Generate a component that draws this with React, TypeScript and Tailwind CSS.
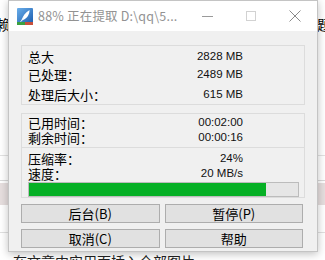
import React from "react";

const cjk = "font-['Noto_Sans_CJK_SC','Noto_Sans',sans-serif]";
const num = "font-['Liberation_Sans','Noto_Sans_CJK_SC',sans-serif]";

function Row({ label, value, h }: { label: string; value: string; h: string }) {
  return (
    <div className={`flex items-center justify-between ${h}`}>
      <span className={`${cjk} text-[13px] leading-[15px] text-black`}>{label}</span>
      <span className={`${num} text-[11.5px] leading-[15px] text-[#111]`}>{value}</span>
    </div>
  );
}

function AppIcon() {
  return (
    <svg width="16" height="17" viewBox="0 0 16 17">
      <defs>
        <linearGradient id="ig" x1="0" y1="0" x2="1" y2="1">
          <stop offset="0" stopColor="#6aaeea" />
          <stop offset="1" stopColor="#1d5fb0" />
        </linearGradient>
      </defs>
      <rect x="0" y="0" width="16" height="15" rx="1" fill="url(#ig)" />
      <path d="M4.5 13 C5.5 8.5 8 4.5 12.5 2 C12.5 6.5 10.5 10 6 12 Z" fill="#fff" />
      <path d="M3.5 14 L6.5 9.5" stroke="#e4eef9" strokeWidth="0.9" />
      <rect x="0" y="14" width="8" height="3" fill="#3aa040" />
      <rect x="8" y="14" width="8" height="3" fill="#c8503c" />
    </svg>
  );
}

function Btn({ children }: { children: React.ReactNode }) {
  return (
    <div
      className={`flex-1 h-[19px] flex items-center justify-center bg-[#e1e1e1] border border-[#adadad] ${cjk} text-[13px] leading-none text-black`}
    >
      {children}
    </div>
  );
}

export default function App() {
  return (
    <div className="relative w-[325px] h-[260px] overflow-hidden bg-white">
      {/* page behind the dialog */}
      <div className="w-full">
        <div className={`flex justify-between items-center h-[40px] pt-[8px] ${cjk} text-[14px] text-black`}>
          <span className="-ml-[4px]">赖</span>
          <span className="-mr-[6px]">题</span>
        </div>
        <div className="h-[115px]" />
        <div className="h-px bg-[#e2e2e2]" />
        <div className="h-[24px]" />
        <div className="h-px bg-[#d8d8d8]" />
        <div className="h-[2px]" />
        <div className="h-[22px] bg-[#e6dede]" />
        <div className="h-[27px]" />
        <div className="h-px bg-[#e0e0e0]" />
        <div className={`pl-[13px] pt-[21px] ${cjk} text-[14px] text-[#222] leading-none whitespace-nowrap`}>
          在文章中实用面插入全部图片
        </div>
      </div>

      {/* dialog window */}
      <div className="absolute left-[8px] top-0 w-[310px] h-[252px] flex flex-col bg-[#f0f0f0] border border-[#c4c4c4] shadow-[0_2px_8px_rgba(0,0,0,0.25)]">
        <div className="h-[30px] flex items-center bg-white shrink-0">
          <div className="ml-[8px] mr-[5px] flex items-center">
            <AppIcon />
          </div>
          <span className={`${cjk} text-[12.5px] text-[#929292] tracking-[0.2px]`}>
            88% 正在提取 D:\qq\5...
          </span>
          <div className="ml-auto flex items-center">
            <div className="w-[44px] flex justify-center">
              <div className="w-[11px] h-px bg-[#9a9a9a]" />
            </div>
            <div className="w-[44px] flex justify-center">
              <div className="w-[10px] h-[10px] border border-[#d2d2d2]" />
            </div>
            <div className="w-[44px] flex justify-center">
              <svg width="12" height="12" viewBox="0 0 12 12">
                <path d="M0.5 0.5 L11.5 11.5 M11.5 0.5 L0.5 11.5" stroke="#8a8a8a" strokeWidth="1" />
              </svg>
            </div>
          </div>
        </div>

        <div className="flex flex-col px-[12px] pt-[14px]">
          <div className="h-[60px] border border-[#dcdcdc] pl-[6px] pr-[61px] pt-[1px] flex flex-col">
            <Row label="总大" value="2828 MB" h="h-[18px]" />
            <Row label="已处理：" value="2489 MB" h="h-[18px]" />
            <div className="h-[2px]" />
            <Row label="处理后大小：" value="615 MB" h="h-[18px]" />
          </div>

          <div className="mt-[8px] h-[85px] border border-[#dcdcdc] flex flex-col">
            <div className="pl-[6px] pr-[61px] pt-[1px] flex flex-col">
              <Row label="已用时间：" value="00:02:00" h="h-[15px]" />
              <Row label="剩余时间：" value="00:00:16" h="h-[15px]" />
            </div>
            <div className="mt-[2px] h-px bg-[#dcdcdc]" />
            <div className="pl-[6px] pr-[61px] pt-[3px] flex flex-col">
              <Row label="压缩率：" value="24%" h="h-[15px]" />
              <Row label="速度：" value="20 MB/s" h="h-[15px]" />
            </div>
            <div className="ml-[6px] mr-[5px] mt-[1px] h-[16px] border border-[#bcbcbc] bg-[#e6e6e6]">
              <div className="h-full bg-[#06b025]" style={{ width: "88%" }} />
            </div>
          </div>

          <div className="mt-[6px] flex gap-[5px] pr-[2px]">
            <Btn>后台(B)</Btn>
            <Btn>暂停(P)</Btn>
          </div>
          <div className="mt-[6px] flex gap-[5px] pr-[2px]">
            <Btn>取消(C)</Btn>
            <Btn>帮助</Btn>
          </div>
        </div>
      </div>
    </div>
  );
}
